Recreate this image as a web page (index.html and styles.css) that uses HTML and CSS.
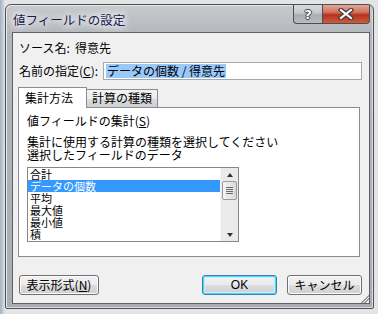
FILE: index.html
```html
<!DOCTYPE html>
<html lang="ja">
<head>
<meta charset="utf-8">
<link rel="stylesheet" href="styles.css">
</head>
<body>
<div class="window">
  <div class="titlebar">
    <div class="title">値フィールドの設定</div>
    <div class="caption-buttons">
      <div class="cap help">?</div>
      <div class="cap close">
        <svg width="18" height="12" viewBox="0 0 18 12"><path d="M4 2 L14 10 M14 2 L4 10" stroke="#3a3a3a" stroke-width="4.5" stroke-linecap="square"/><path d="M4 2 L14 10 M14 2 L4 10" stroke="#fff" stroke-width="2.2" stroke-linecap="square"/></svg>
      </div>
    </div>
  </div>
  <div class="client">
    <div class="row source">ソース名:&nbsp; 得意先</div>
    <div class="row name">
      <span class="label">名前の指定(<u>C</u>):</span>
      <div class="input"><span class="sel">データの個数 / 得意先</span></div>
    </div>
    <div class="tabs">
      <div class="tab active">集計方法</div>
      <div class="tab">計算の種類</div>
    </div>
    <div class="panel">
      <div class="ptext first">値フィールドの集計(<u>S</u>)</div>
      <div class="ptext second">集計に使用する計算の種類を選択してください</div>
      <div class="ptext">選択したフィールドのデータ</div>
      <div class="listbox">
        <div class="items">
          <div class="item">合計</div>
          <div class="item selected">データの個数</div>
          <div class="item">平均</div>
          <div class="item">最大値</div>
          <div class="item">最小値</div>
          <div class="item">積</div>
        </div>
        <div class="scrollbar">
          <div class="arrow up"></div>
          <div class="thumb"><span></span><span></span><span></span><span></span></div>
          <div class="spacer"></div>
          <div class="arrow down"></div>
        </div>
      </div>
    </div>
    <div class="buttons">
      <div class="btn format">表示形式(<u>N</u>)</div>
      <div class="right-btns">
        <div class="btn ok">OK</div>
        <div class="btn">キャンセル</div>
      </div>
    </div>
    <div class="grip"></div>
  </div>
</div>
</body>
</html>
```
FILE: styles.css
```css
html, body {
  margin: 0;
  padding: 0;
}
body {
  width: 378px;
  height: 314px;
  overflow: hidden;
  background: linear-gradient(90deg, #9fb3c8 0, #c8ccd2 3px, #e4e4e4 5px);
  font-family: "Noto Sans CJK JP", "Liberation Sans", sans-serif;
  font-size: 12px;
  color: #000;
}
.window {
  margin: 4px 0 0 5px;
  width: 369px;
  height: 305px;
  box-sizing: border-box;
  border: 1px solid #4b5259;
  border-radius: 6px 6px 2px 2px;
  background: linear-gradient(180deg, #c7cacd 0, #b3b7bb 30px, #a9adb1 100%);
  box-shadow: inset 1px 1px 0 #e6e8ea, inset -1px -1px 0 #d9dcde;
  padding: 0 3px 4px 6px;
  display: flex;
  flex-direction: column;
}
.titlebar {
  height: 27px;
  display: flex;
  justify-content: space-between;
  align-items: flex-start;
}
.title {
  margin-top: 8px;
  margin-left: 1px;
  color: #1c1a4e;
  line-height: 14px;
  font-size: 12.5px;
  text-shadow: 0 0 6px #fff, 0 0 8px #fff, 0 0 10px #eef;
}
.caption-buttons {
  display: flex;
  height: 19px;
}
.cap {
  height: 19px;
  box-sizing: border-box;
  border: 1px solid #4a4f55;
  border-top: none;
  display: flex;
  align-items: center;
  justify-content: center;
}
.help {
  width: 29px;
  border-radius: 0 0 0 4px;
  border-right: none;
  background: linear-gradient(180deg, #d8dadd 0, #c3c7cb 45%, #a9adb2 55%, #b9bdc1 100%);
  color: #fff;
  font-family: "DejaVu Sans", sans-serif;
  font-weight: bold;
  font-size: 13px;
  text-shadow: 1px 0 0 #444, -1px 0 0 #444, 0 1px 0 #444, 0 -1px 0 #444;
}
.close {
  width: 48px;
  border-radius: 0 0 4px 0;
  background: linear-gradient(180deg, #e2a897 0, #d0735d 40%, #b8321a 55%, #cc5c3e 100%);
}
.client {
  flex: 1;
  background: #f0f0f0;
  border: 1px solid #5d6166;
  position: relative;
  display: flex;
  flex-direction: column;
}
.row {
  line-height: 14px;
}
.source {
  margin: 8px 0 0 6px;
}
.name {
  display: flex;
  align-items: center;
  margin: 7px 0 0 6px;
}
.label {
  width: 84px;
}
u {
  text-decoration: underline;
  text-underline-offset: 1px;
}
.input {
  width: 259px;
  height: 18px;
  box-sizing: border-box;
  border: 1px solid #a5a7ab;
  background: #fff;
  padding: 1px 0 0 2px;
  line-height: 14px;
}
.sel {
  background: #99c9fb;
  display: inline-block;
  padding: 0 1px;
}
.tabs {
  display: flex;
  margin: 7px 0 0 5px;
  height: 20px;
  align-items: flex-end;
  position: relative;
  z-index: 1;
}
.tab {
  box-sizing: border-box;
  height: 18px;
  padding: 0 5px;
  border: 1px solid #898c95;
  border-bottom: none;
  background: linear-gradient(180deg, #f3f3f3 0, #ebebeb 50%, #dcdcdc 51%, #cfcfcf 100%);
  line-height: 16px;
  width: 72px;
  font-size: 12px;
}
.tab.active {
  height: 21px;
  width: 69px;
  background: #fff;
  margin-bottom: -1px;
  line-height: 20px;
  padding-left: 6px;
  border-right: 1px solid #898c95;
  margin-right: -1px;
  position: relative;
  z-index: 2;
}
.panel {
  margin-left: 5px;
  width: 342px;
  height: 150px;
  box-sizing: border-box;
  border: 1px solid #898c95;
  background: #fff;
  padding: 6px 0 0 8px;
}
.ptext {
  line-height: 13px;
}
.ptext.second {
  margin-top: 8px;
}
.listbox {
  margin-top: 6px;
  width: 212px;
  height: 75px;
  box-sizing: border-box;
  border: 1px solid #828790;
  display: flex;
}
.items {
  flex: 1;
}
.item {
  height: 12px;
  line-height: 12px;
  font-size: 11px;
  padding-left: 2px;
  white-space: nowrap;
}
.item.selected {
  background: #3399ff;
  color: #fff;
}
.scrollbar {
  width: 17px;
  background: #eaeaea;
  border-left: 1px solid #f5f5f5;
  display: flex;
  flex-direction: column;
  align-items: center;
}
.arrow {
  height: 13px;
  width: 17px;
  display: flex;
  align-items: center;
  justify-content: center;
}
.arrow.up::before, .arrow.down::before {
  content: "";
  width: 0;
  height: 0;
  border-left: 3.5px solid transparent;
  border-right: 3.5px solid transparent;
}
.arrow.up::before {
  border-bottom: 4px solid #333;
}
.arrow.down::before {
  border-top: 4px solid #333;
}
.thumb {
  width: 15px;
  height: 19px;
  box-sizing: border-box;
  border: 1px solid #9b9b9b;
  border-radius: 2px;
  background: linear-gradient(90deg, #f4f4f4 0, #e8e8e8 50%, #d8d8d8 100%);
  display: flex;
  flex-direction: column;
  align-items: center;
  justify-content: center;
  gap: 1px;
}
.thumb span {
  width: 7px;
  height: 1px;
  background: #6b6b6b;
}
.spacer {
  flex: 1;
}
.buttons {
  display: flex;
  justify-content: space-between;
  margin: 18px 0 0 6px;
  padding-right: 7px;
}
.right-btns {
  display: flex;
  gap: 10px;
}
.btn {
  height: 20px;
  box-sizing: border-box;
  border: 1px solid #707070;
  border-radius: 3px;
  background: linear-gradient(180deg, #f2f2f2 0, #ebebeb 50%, #dddddd 51%, #cfcfcf 100%);
  box-shadow: inset 0 0 0 1px #fcfcfc;
  display: flex;
  align-items: center;
  justify-content: center;
  width: 75px;
  line-height: 14px;
}
.btn.format {
  width: 80px;
}
.btn.ok {
  border-color: #3c7fb1;
  box-shadow: inset 0 0 0 1px #48d7fb, inset 0 0 0 2px #c5eefb;
  font-family: "Liberation Sans", sans-serif;
}
.grip {
  position: absolute;
  right: 0;
  bottom: 0;
  width: 10px;
  height: 10px;
  background:
    linear-gradient(135deg, transparent 0 60%, #9a9a9a 60% 68%, transparent 68% 75%, #9a9a9a 75% 83%, transparent 83%);
}
```
